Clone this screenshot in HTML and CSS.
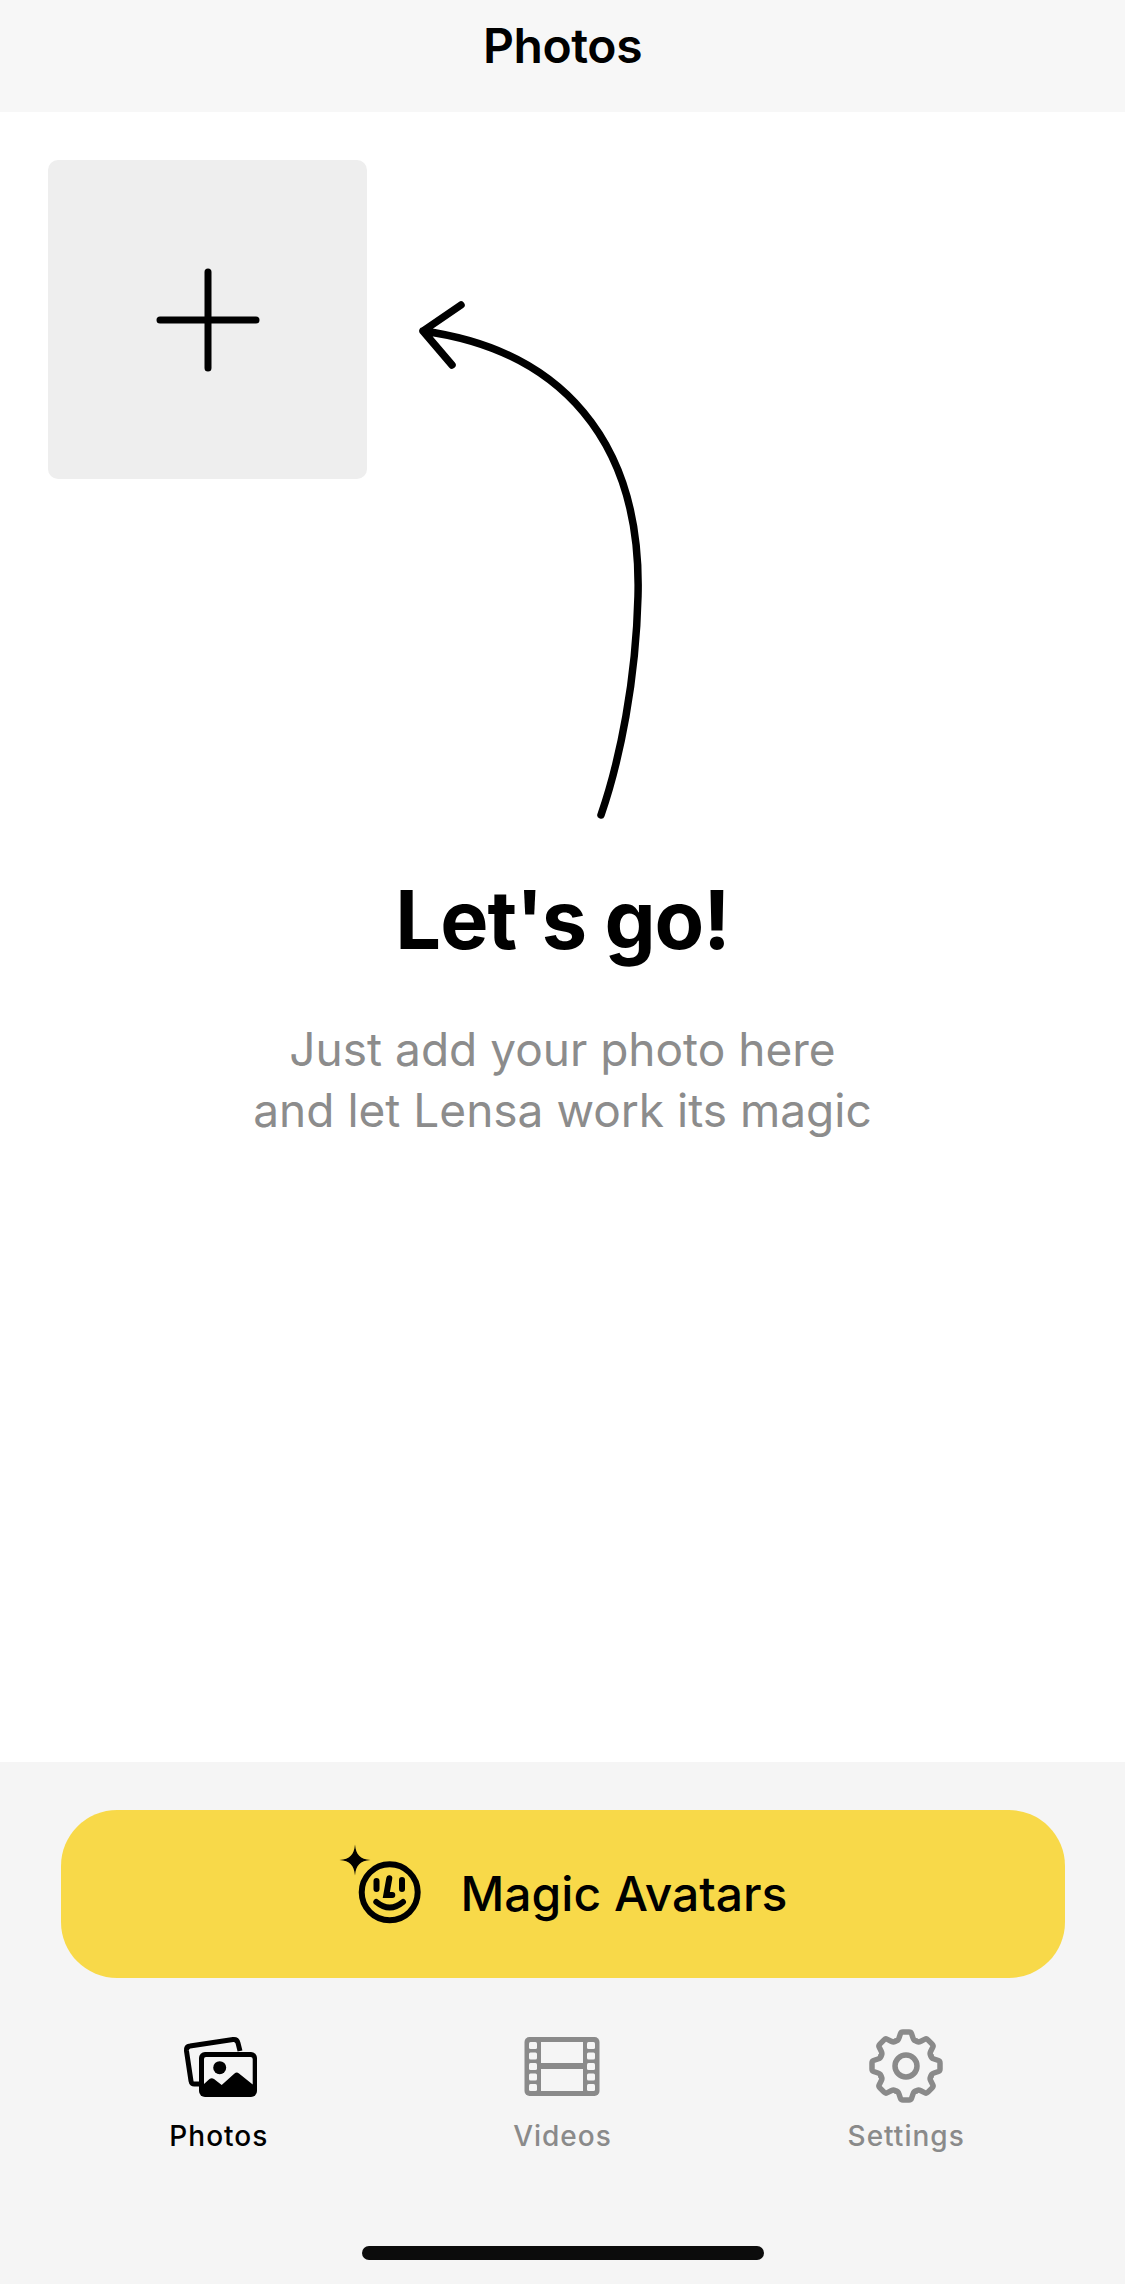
FILE: index.html
```html
<!DOCTYPE html>
<html lang="en">
<head>
<meta charset="utf-8">
<title>Photos</title>
<link rel="stylesheet" href="styles.css">
</head>
<body>
<div class="page">
  <header class="topbar"><h1 class="topbar-title">Photos</h1></header>
  <main class="content">
    <div class="start-row">
      <button class="add-tile" aria-label="Add photo">
        <svg class="plus" viewBox="0 0 110 110"><path d="M55 7V103M7 55H103"/></svg>
      </button>
      <svg class="arrow" viewBox="0 0 240 530"><path d="M8 36C145 55 227 145 223 301C221 385 205 465 186 520M46 10L8 36L37 70"/></svg>
    </div>
    <section class="hero">
      <h2 class="hero-title">Let's go!</h2>
      <p class="hero-text">Just add your photo here<br>and let Lensa work its magic</p>
    </section>
  </main>
  <footer class="bottom">
    <button class="magic">
      <svg class="magic-icon" viewBox="15 14 82 100">
        <path class="star" d="M31 14.5C32 25 36 29 46.5 30C36 31 32 35 31 45.5C30 35 26 31 15.5 30C26 29 30 25 31 14.5Z"/>
        <circle class="face" cx="65.7" cy="62.3" r="28"/>
        <path class="face" d="M52.5 51V59M78 50V59M65.3 48.3L62.3 65H68.3M52.3 72Q65.7 83 79 72"/>
      </svg>
      <span>Magic Avatars</span>
    </button>
    <nav class="tabs">
      <div class="tab tab-active">
        <svg class="tab-icon" viewBox="0 0 84 84">
          <path class="back" d="M22 60H18Q14.5 60.5 14 57L9.5 27Q9 22.5 13 22L56 15.5Q60 15 61 19L63 27"/>
          <rect class="solid" x="22" y="28" width="58" height="45" rx="6"/>
          <path class="window" d="M27 35Q27 33 29 33H73.5Q75.7 33 75.7 35V60.5L62 49.5Q59.7 47.5 57.5 49.5L44.7 61L37 55Q34.7 53.5 32.5 55L27 60Z"/>
          <circle class="solid" cx="42.7" cy="43.7" r="6.5"/>
        </svg>
        <span class="tab-label">Photos</span>
      </div>
      <div class="tab">
        <svg class="tab-icon" viewBox="0 0 84 84">
          <rect class="film" x="4.5" y="13" width="75" height="59" rx="5"/>
          <g class="film-holes">
            <rect x="9" y="18" width="8" height="7" rx="1.5"/><rect x="9" y="28.5" width="8" height="7" rx="1.5"/><rect x="9" y="39" width="8" height="7" rx="1.5"/><rect x="9" y="49.5" width="8" height="7" rx="1.5"/><rect x="9" y="60" width="8" height="7" rx="1.5"/>
            <rect x="67" y="18" width="8" height="7" rx="1.5"/><rect x="67" y="28.5" width="8" height="7" rx="1.5"/><rect x="67" y="39" width="8" height="7" rx="1.5"/><rect x="67" y="49.5" width="8" height="7" rx="1.5"/><rect x="67" y="60" width="8" height="7" rx="1.5"/>
            <rect x="21" y="18" width="42" height="21"/><rect x="21" y="45" width="42" height="22"/>
          </g>
        </svg>
        <span class="tab-label">Videos</span>
      </div>
      <div class="tab">
        <svg class="tab-icon" viewBox="0 0 84 84">
          <g class="gear">
            <path id="tooth" d="M31.67 17.06Q34 17 35 14L36.5 9.5Q37 8 39 8H45Q47 8 47.5 9.5L49 14Q50 17 52.33 17.06"/>
            <use href="#tooth" transform="rotate(45 42 42)"/>
            <use href="#tooth" transform="rotate(90 42 42)"/>
            <use href="#tooth" transform="rotate(135 42 42)"/>
            <use href="#tooth" transform="rotate(180 42 42)"/>
            <use href="#tooth" transform="rotate(225 42 42)"/>
            <use href="#tooth" transform="rotate(270 42 42)"/>
            <use href="#tooth" transform="rotate(315 42 42)"/>
            <circle cx="42" cy="42" r="11"/>
          </g>
        </svg>
        <span class="tab-label">Settings</span>
      </div>
    </nav>
    <div class="home-indicator"></div>
  </footer>
</div>
</body>
</html>
```

FILE: styles.css
```css
* { box-sizing: border-box; }
html, body { margin: 0; padding: 0; background: #fff; }
body { font-family: Inter, "Liberation Sans", sans-serif; color: #000; }
button { border: 0; padding: 0; font: inherit; color: inherit; }

.page { width: 1125px; height: 2284px; display: flex; flex-direction: column; overflow: hidden; }

.topbar { height: 112px; background: #f7f7f7; display: flex; justify-content: center; padding-top: 16px; }
.topbar-title { margin: 0; font-size: 48px; line-height: 60px; font-weight: 600; letter-spacing: -0.4px; }

.content { flex: 1; background: #fff; }
.start-row { display: flex; align-items: flex-start; padding: 48px 0 0 48px; }
.add-tile { width: 319px; height: 319px; flex: none; background: #eee; border-radius: 10px; display: flex; align-items: center; justify-content: center; }
.plus { width: 110px; height: 110px; }
.plus path { fill: none; stroke: #000; stroke-width: 7; stroke-linecap: round; }
.arrow { width: 240px; height: 530px; flex: none; margin: 135px 0 0 48px; }
.arrow path { fill: none; stroke: #000; stroke-width: 7.5; stroke-linecap: round; stroke-linejoin: round; }

.hero { text-align: center; margin-top: 45px; }
.hero-title { margin: 0; font-size: 81px; line-height: 100px; font-weight: 700; letter-spacing: -1px; }
.hero-text { margin: 49px 0 0; font-size: 46px; line-height: 61px; font-weight: 400; color: #8c8c8c; }

.bottom { height: 522px; background: #f5f5f5; padding: 48px 60px 0 61px; display: flex; flex-direction: column; }
.magic { height: 168px; background: #f8d949; border-radius: 56px; display: flex; align-items: center; justify-content: center; gap: 40px; font-size: 48px; line-height: 60px; font-weight: 500; }
.magic-icon { width: 82px; height: 100px; }
.star { fill: #000; }
.face { fill: none; stroke: #000; stroke-width: 6; stroke-linecap: round; stroke-linejoin: miter; }

.tabs { display: grid; grid-template-columns: repeat(3, 343.67px); margin: 46px 0 0 -14px; }
.tab { display: flex; flex-direction: column; align-items: center; gap: 10px; color: #8a8a8a; }
.tab-active { color: #000; }
.tab-icon { width: 84px; height: 84px; }
.tab-label { font-size: 28px; line-height: 36px; font-weight: 500; letter-spacing: 1px; }
.back { fill: none; stroke: #000; stroke-width: 5; }
.solid { fill: #000; }
.window { fill: #f5f5f5; }
.film { fill: #8a8a8a; }
.film-holes rect { fill: #f5f5f5; }
.gear path, .gear use, .gear circle { fill: none; stroke: #8a8a8a; stroke-width: 5.5; stroke-linecap: round; stroke-linejoin: round; }

.home-indicator { width: 402px; height: 14px; background: #0c0c0c; border-radius: 7px; margin: 92px auto 0; flex: none; }
```
